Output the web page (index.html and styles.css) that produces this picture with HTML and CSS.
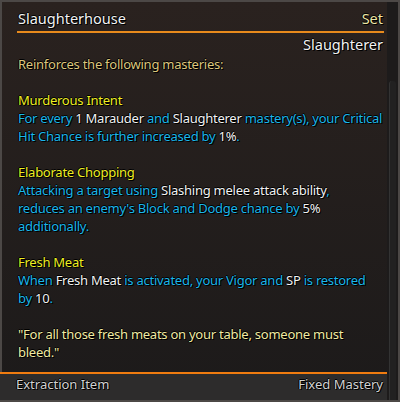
FILE: index.html
```html
<!DOCTYPE html>
<html>
<head>
    <title>Slaughterhouse</title>
    <link rel="stylesheet" href="styles.css">
</head>
<body>
    <div class="tooltip">
        <div class="main">
            <div class="header">
                <span class="title">Slaughterhouse</span>
                <span class="type">Set</span>
            </div>
            <div class="sub">Slaughterer</div>

            <div class="content">
                <p class="intro">Reinforces the following masteries:</p>

                <p class="name">Murderous Intent</p>
                <p class="desc">For every <b>1 Marauder</b> and <b>Slaughterer</b> mastery(s), your Critical<br>Hit Chance is further increased by <b>1%</b>.</p>

                <p class="name">Elaborate Chopping</p>
                <p class="desc">Attacking a target using <b>Slashing melee attack ability</b>,<br>reduces an enemy's Block and Dodge chance by <b>5%</b><br>additionally.</p>

                <p class="name">Fresh Meat</p>
                <p class="desc">When <b>Fresh Meat</b> is activated, your Vigor and <b>SP</b> is restored<br>by <b>10</b>.</p>

                <p class="quote">"For all those fresh meats on your table, someone must<br>bleed."</p>
            </div>

            <div class="footer">
                <span>Extraction Item</span>
                <span>Fixed Mastery</span>
            </div>
        </div>
        <div class="side">
            <div class="scrollbar"></div>
        </div>
    </div>
</body>
</html>
```

FILE: styles.css
```css
* {
    margin: 0;
    padding: 0;
    box-sizing: border-box;
}

body {
    font-family: "Noto Sans", "Open Sans", sans-serif;
    font-size: 13px;
    line-height: 18px;
    letter-spacing: -0.25px;
    background-color: #1c1a1a;
    text-shadow: 1px 1px 0 #000, -1px 0 0 #000, 0 -1px 0 #000;
}

.tooltip {
    width: 400px;
    height: 402px;
    display: flex;
    border: 2px solid #4c4846;
    background: linear-gradient(#2a221f, #1c1a1a);
}

.main {
    flex: 1;
    display: flex;
    flex-direction: column;
    min-height: 0;
}

.header {
    display: flex;
    justify-content: space-between;
    align-items: flex-end;
    margin: 0 3px 0 15px;
    padding: 7px 1px 3px 1px;
    border-bottom: 2px solid #e88a1c;
    font-size: 14.5px;
    letter-spacing: 0;
    line-height: 19px;
}

.title {
    color: #f2f2f2;
}

.type {
    color: #ece6a6;
}

.sub {
    text-align: right;
    color: #f2f2f2;
    font-size: 14.5px;
    letter-spacing: 0;
    margin: 2px 4px 0 0;
}

.content {
    flex: 1;
    min-height: 0;
    padding: 2px 0 0 16px;
    white-space: nowrap;
}

.content p {
    margin-bottom: 18px;
}

.content .name,
.content .quote {
    margin-bottom: 0;
}

.content .name {
    color: #eeee22;
}

.intro {
    color: #dcc67c;
}

.desc {
    color: #1cb6ea;
}

.desc b {
    font-weight: normal;
    color: #f2f2f2;
}

.quote {
    color: #f0eaa2;
}

.footer {
    display: flex;
    justify-content: space-between;
    align-items: center;
    height: 28px;
    margin-left: -2px;
    padding: 0 4px 7px 16px;
    background-color: #2d2c2c;
    border-top: 2px solid #f07c10;
    color: #d2d2d2;
    font-size: 13px;
    letter-spacing: 0;
}

.side {
    width: 11px;
    padding-top: 79px;
    background-color: #1d1b1b;
}

.scrollbar {
    height: 100%;
    margin-left: 2px;
    width: 7px;
    border-radius: 3px 3px 0 0;
    background-color: #222121;
    border-left: 1px solid #333;
}
```
